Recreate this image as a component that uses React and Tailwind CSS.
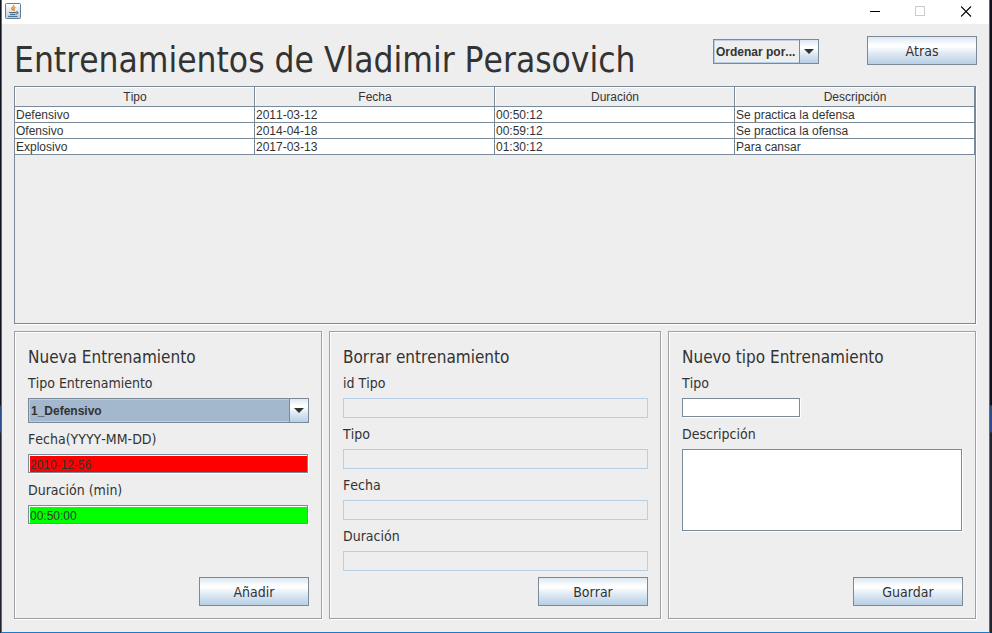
import { useState } from "react";

const ui = "font-['DejaVu_Sans_Condensed',Tahoma,sans-serif]";
const etched =
  "border border-[#a0a0a0] shadow-[1px_1px_0_#fff,inset_1px_1px_0_#fff]";
const sunken =
  "border border-[#7a8a99] shadow-[1px_1px_0_#fff,inset_1px_1px_0_#fff]";

const columns = ["Tipo", "Fecha", "Duración", "Descripción"];
const trainings = [
  ["Defensivo", "2011-03-12", "00:50:12", "Se practica la defensa"],
  ["Ofensivo", "2014-04-18", "00:59:12", "Se practica la ofensa"],
  ["Explosivo", "2017-03-13", "01:30:12", "Para cansar"],
];

function JavaIcon() {
  return (
    <svg width="16" height="16" viewBox="0 0 16 16" aria-hidden="true">
      <defs>
        <linearGradient id="tile" x1="0" y1="0" x2="0" y2="1">
          <stop offset="0" stopColor="#ffffff" />
          <stop offset="1" stopColor="#c4ced8" />
        </linearGradient>
      </defs>
      <rect x="0.5" y="0.5" width="15" height="15" rx="1" fill="url(#tile)" stroke="#5d7d98" />
      <path d="M8.800 2c.5 1.500-2.500 2.300-2 3.800 .2.700.9 1 1.200 1.700M10.500 4.300c-1.500.5-2.300 1.200-1.500 2.200.4.600.2 1-.2 1.400" fill="none" stroke="#ee8a1d" strokeWidth="1.400" />
      <path d="M4 9.500h7M5 11.300h5.500M11 9c2.500-.5 2.300 1.800 0 2" fill="none" stroke="#4a7190" strokeWidth="1.200" />
      <path d="M3 13.400h9.500" stroke="#4a7190" strokeWidth="1.100" />
    </svg>
  );
}

function TitleBar() {
  return (
    <header className="flex h-6 shrink-0 items-start justify-between bg-white pl-[3px]">
      <div className="pt-[3px]">
        <JavaIcon />
      </div>
      <div className="flex h-[23px]">
        <button aria-label="Minimizar" className="flex w-[45px] items-center justify-center">
          <svg width="11" height="11" viewBox="0 0 11 11">
            <path d="M0 5.500h10" stroke="#000" />
          </svg>
        </button>
        <button aria-label="Maximizar" disabled className="flex w-[45px] items-center justify-center">
          <svg width="11" height="11" viewBox="0 0 11 11">
            <rect x="0.5" y="0.5" width="9" height="9" fill="none" stroke="#ccc" />
          </svg>
        </button>
        <button aria-label="Cerrar" className="flex w-[46px] items-center justify-center">
          <svg width="11" height="11" viewBox="0 0 11 11">
            <path d="M0 .500l10 10M10 .500l-10 10" stroke="#000" strokeWidth="1.100" />
          </svg>
        </button>
      </div>
    </header>
  );
}

function Button({ children }) {
  return (
    <button
      className={`${ui} h-[29px] w-[110px] border border-[#7a8a99] bg-[linear-gradient(#dde8f3,#fff_30%,#fff_35%,#dde8f3_62%,#b8cfe5)] text-sm leading-none`}
    >
      {children}
    </button>
  );
}

function Combo({ id, label, options, className, tone }) {
  return (
    <div className={`relative flex h-[25px] border border-[#7a8a99] ${className}`}>
      <select
        id={id}
        aria-label={label}
        className={`w-full appearance-none border border-[#b8cfe5] pl-px font-['Liberation_Sans',Arial,sans-serif] text-xs font-bold outline-none ${tone}`}
      >
        {options.map((o) => (
          <option key={o}>{o}</option>
        ))}
      </select>
      <span className="pointer-events-none absolute inset-y-0 right-0 flex w-[19px] items-center justify-center border-l border-[#7a8a99] bg-[linear-gradient(#dde8f3,#fff_30%,#fff_35%,#dde8f3_62%,#b8cfe5)]">
        <svg width="10" height="5" viewBox="0 0 10 5">
          <path d="M0 0h10L5 5z" fill="#333" />
        </svg>
      </span>
    </div>
  );
}

function Label({ htmlFor, children }) {
  return (
    <label htmlFor={htmlFor} className={`${ui} block pt-0.5 text-sm leading-[17px]`}>
      {children}
    </label>
  );
}

function Field({ id, className, ...rest }) {
  return (
    <input
      id={id}
      className={`mr-px mb-px h-[19px] pt-0.5 pl-px font-['Liberation_Sans',Arial,sans-serif] text-xs outline-none ${sunken} ${className}`}
      {...rest}
    />
  );
}

function LockedField({ id }) {
  return <input id={id} disabled className="h-5 border border-[#b8cfe5] bg-[#eee] px-1 text-xs" />;
}

function Panel({ title, action, children }) {
  return (
    <section className={`flex flex-col gap-1.5 pt-[13px] pr-3 pb-3 pl-[13px] ${etched}`}>
      <h2 className={`${ui} pt-0.5 text-[17px] leading-5`}>{title}</h2>
      {children}
      <div className="mt-auto flex justify-end">
        <Button>{action}</Button>
      </div>
    </section>
  );
}

export default function App() {
  const [fecha, setFecha] = useState("2010-12-56");
  const [duracion, setDuracion] = useState("00:50:00");

  return (
    <div className="flex h-screen min-h-[633px] bg-[linear-gradient(#10131c_405px,#2f4a86_406px,#2f4a86_432px,#20242e_433px)] pr-0.5 pl-px text-[#333] [font-kerning:none]">
      <div className="flex min-w-0 flex-1 flex-col border-x border-b border-[#1e7ac8] bg-[#eee]">
        <TitleBar />
        <main className="flex flex-1 flex-col pr-[13px] pb-[13px] pl-3">
          <div className="-mr-px flex h-[62px] items-start pt-3">
            <h1 className={`${ui} flex-1 text-[35px] leading-[48px] whitespace-nowrap`}>
              Entrenamientos de Vladimir Perasovich
            </h1>
            <Combo
              id="orden"
              label="Ordenar por"
              options={["Ordenar por..."]}
              className="mt-[3px] mr-12 w-[106px]"
              tone="bg-[#eee]"
            />
            <Button>Atras</Button>
          </div>

          <div className="min-h-[238px] flex-1 border border-[#7a8a99] shadow-[1px_1px_0_#fff]">
            <table className="w-full table-fixed border-separate border-spacing-0 font-['Liberation_Sans',Arial,sans-serif] text-xs">
              <thead>
                <tr>
                  {columns.map((c) => (
                    <th
                      key={c}
                      className="h-5 border-r border-b border-[#7a8a99] p-0 pt-px pl-px text-center leading-[18px] font-normal shadow-[inset_1px_1px_0_#fff]"
                    >
                      {c}
                    </th>
                  ))}
                </tr>
              </thead>
              <tbody>
                {trainings.map((row) => (
                  <tr key={row[0]}>
                    {row.map((cell) => (
                      <td
                        key={cell}
                        className="h-4 border-r border-b border-[#7a8a99] bg-white p-0 pt-px pl-px leading-[14px]"
                      >
                        {cell}
                      </td>
                    ))}
                  </tr>
                ))}
              </tbody>
            </table>
          </div>

          <div className="mt-[7px] grid min-h-[288px] grid-cols-[308fr_332fr_308fr] gap-[7px]">
            <Panel title="Nueva Entrenamiento" action="Añadir">
              <Label htmlFor="tipo-entrenamiento">Tipo Entrenamiento</Label>
              <Combo
                id="tipo-entrenamiento"
                options={["1_Defensivo", "2_Ofensivo", "3_Explosivo"]}
                className="w-full"
                tone="bg-[#a3b8cc]"
              />
              <Label htmlFor="fecha">Fecha(YYYY-MM-DD)</Label>
              <Field id="fecha" className="bg-[#f00]" value={fecha} onChange={(e) => setFecha(e.target.value)} />
              <Label htmlFor="duracion">Duración (min)</Label>
              <Field id="duracion" className="bg-[#0f0]" value={duracion} onChange={(e) => setDuracion(e.target.value)} />
            </Panel>

            <Panel title="Borrar entrenamiento" action="Borrar">
              <Label htmlFor="borrar-id">id Tipo</Label>
              <LockedField id="borrar-id" />
              <Label htmlFor="borrar-tipo">Tipo</Label>
              <LockedField id="borrar-tipo" />
              <Label htmlFor="borrar-fecha">Fecha</Label>
              <LockedField id="borrar-fecha" />
              <Label htmlFor="borrar-duracion">Duración</Label>
              <LockedField id="borrar-duracion" />
            </Panel>

            <Panel title="Nuevo tipo Entrenamiento" action="Guardar">
              <Label htmlFor="nuevo-tipo">Tipo</Label>
              <Field id="nuevo-tipo" className="w-[118px] bg-white" />
              <Label htmlFor="nuevo-descripcion">Descripción</Label>
              <textarea
                id="nuevo-descripcion"
                className={`mr-px h-[82px] resize-none bg-white px-px text-xs outline-none ${sunken}`}
              />
            </Panel>
          </div>
        </main>
      </div>
    </div>
  );
}
